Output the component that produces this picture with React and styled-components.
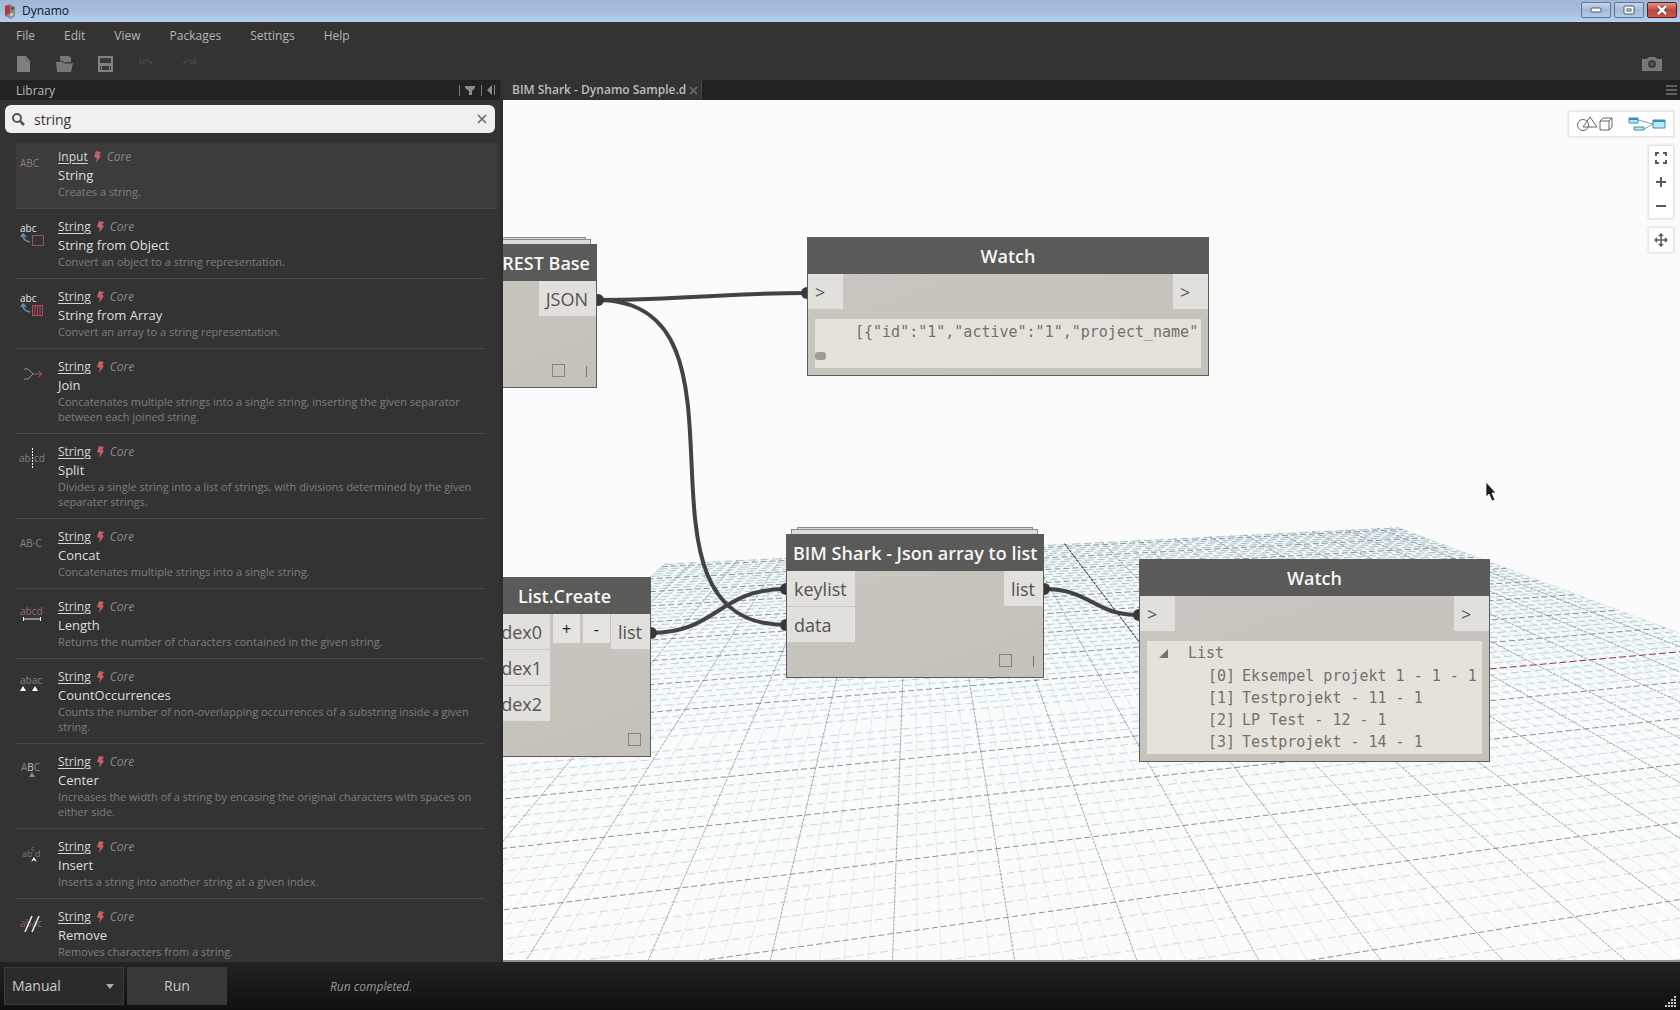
import React from "react";
import styled, { createGlobalStyle } from "styled-components";

const Global = createGlobalStyle`
  *, *::before, *::after { box-sizing: border-box; }
  html, body { margin: 0; height: 100%; overflow: hidden; background: #333; }
  body { font-family: "Open Sans", "Noto Sans", sans-serif; font-size: 13px; color: #c8c8c8; }
  button, input, select { font-family: inherit; margin: 0; padding: 0; border: 0; }
  a { color: inherit; text-decoration: none; }
  ul { list-style: none; margin: 0; padding: 0; }
  svg { display: block; }
`;

const Window = styled.div`
  display: flex;
  flex-direction: column;
  height: 100vh;
  background: #333;
`;

/* ---------- title bar ---------- */
const TitleBar = styled.header`
  display: flex;
  align-items: center;
  gap: 6px;
  height: 22px;
  padding: 0 3px 0 4px;
  background: linear-gradient(#a0b8d6, #a5bddb 45%, #b6cef0);
  color: #101828;
`;
const AppName = styled.span`
  flex: 1;
  font-size: 12px;
  line-height: 20px;
`;
const WindowButtons = styled.div`
  display: flex;
  gap: 3px;
  padding-bottom: 2px;
`;
const WindowButton = styled.button`
  display: grid;
  place-items: center;
  width: 30px;
  height: 16px;
  border: 1px solid ${(p) => (p.$close ? "#5c1c1c" : "#5d7599")};
  border-radius: 2px;
  background: ${(p) =>
    p.$close ? "linear-gradient(#dc9488, #c2483a 50%, #c9594a)" : "linear-gradient(#c5d6ec, #a3bad9 50%, #b4cbe9)"};
`;

/* ---------- menu and tool bars ---------- */
const Menu = styled.nav`
  display: flex;
  gap: 29px;
  height: 26px;
  padding: 0 16px;
  font-size: 12px;
  line-height: 27px;
  color: #b4b4b4;
`;
const ToolBar = styled.div`
  display: flex;
  align-items: center;
  gap: 17px;
  height: 32px;
  padding: 0 16px 0 12px;
`;
const ToolButton = styled.button`
  display: grid;
  place-items: center;
  width: 24px;
  height: 24px;
  background: none;
  &:last-child { margin-left: auto; }
`;

/* ---------- work area ---------- */
const Main = styled.main`
  display: flex;
  flex: 1;
  min-height: 0;
`;
const Sidebar = styled.aside`
  display: flex;
  flex-direction: column;
  flex: none;
  width: 503px;
  border-right: 3px solid #2e2e2e;
  background: #333;
`;
const PanelHeader = styled.div`
  display: flex;
  align-items: center;
  justify-content: space-between;
  flex: none;
  height: 20px;
  padding: 0 4px 0 16px;
  background: #222;
  color: #b8b8b8;
`;
const PanelTitle = styled.h2`
  margin: 0;
  font-size: 12px;
  font-weight: 400;
  line-height: 21px;
`;
const PanelTools = styled.div`
  display: flex;
  gap: 5px;
`;
const PanelButton = styled.button`
  padding-left: 4px;
  border-left: 1px solid #777;
  height: 11px;
  background: none;
`;
const SearchBox = styled.label`
  display: flex;
  align-items: center;
  gap: 9px;
  flex: none;
  height: 28px;
  margin: 5px 5px 6px;
  padding: 0 7px;
  border-radius: 6px;
  background: #f1efef;
`;
const SearchInput = styled.input`
  flex: 1;
  min-width: 0;
  background: none;
  outline: none;
  color: #333;
  font-size: 14px;
`;
const ClearButton = styled.button`
  background: none;
`;
const Results = styled.ul`
  flex: 1;
  min-height: 0;
  overflow: hidden;
`;
const Result = styled.li`
  display: grid;
  grid-template-columns: 42px 1fr;
  margin: 0 ${(p) => (p.$active ? 3 : 15)}px 0 16px;
  padding: 9px ${(p) => (p.$active ? 12 : 0)}px 9px 0;
  border-bottom: 1px solid #4a4a4a;
  background: ${(p) => (p.$active ? "linear-gradient(#333 4px, #3c3c3c 4px)" : "transparent")};
`;
const Meta = styled.div`
  display: flex;
  align-items: center;
  gap: 5px;
  height: 18px;
  font-size: 12px;
  line-height: 18px;
  color: #8a8a8a;
`;
const Category = styled.a`
  color: #d6d6d6;
  text-decoration: underline;
  text-underline-offset: 2px;
`;
const Name = styled.div`
  font-size: 13px;
  line-height: 18px;
  color: #dedede;
`;
const Description = styled.div`
  font-size: 11px;
  line-height: 15px;
  color: #7e7e7e;
`;

/* ---------- workspace ---------- */
const Workspace = styled.section`
  display: flex;
  flex-direction: column;
  flex: 1;
  min-width: 0;
`;
const TabStrip = styled.div`
  display: flex;
  align-items: center;
  justify-content: space-between;
  flex: none;
  height: 20px;
  padding-right: 3px;
  background: #222;
`;
const Tab = styled.div`
  display: flex;
  align-items: center;
  gap: 3px;
  height: 20px;
  padding: 0 3px 0 9px;
  background: #333;
  border-right: 1px solid #484848;
  font-size: 12px;
  font-weight: 600;
  line-height: 20px;
  color: #bdbdbd;
`;
const PlainButton = styled.button`
  background: none;
`;
const Canvas = styled.div`
  position: relative;
  isolation: isolate;
  flex: 1;
  min-height: 0;
  overflow: hidden;
  border-bottom: 2px solid #8e8e8e;
  background: #fcfbfc;
  color: #55534f;
`;
const Backdrop = styled.svg`
  position: absolute;
  inset: 0;
`;
const NodeFrame = styled.article`
  position: absolute;
  left: ${(p) => p.$x}px;
  top: ${(p) => p.$y}px;
  display: flex;
  flex-direction: column;
  width: ${(p) => p.$w}px;
  height: ${(p) => p.$h}px;
  border: 1px solid #5b5b59;
  background: linear-gradient(160deg, #cac6c2, #c4c2b8);
  &::before, &::after {
    content: ${(p) => (p.$stacked ? '""' : "none")};
    position: absolute;
    z-index: -1;
    border: 1px solid #8b8b88;
    border-bottom: 0;
    background: #dcdbd9;
  }
  &::before { left: 10px; right: 10px; top: -8px; height: 4px; }
  &::after { left: 4px; right: 5px; top: -6px; height: 5px; }
`;
const NodeTitle = styled.h3`
  flex: none;
  height: 36px;
  margin: 0;
  padding: 0 6px;
  background: #5a5a58;
  color: #f6f6f4;
  font-size: 18px;
  font-weight: 600;
  line-height: 37px;
  text-align: ${(p) => (p.$right ? "right" : "center")};
  white-space: nowrap;
`;
const NodeBody = styled.div`
  display: flex;
  align-items: flex-start;
`;
const Ports = styled.div`
  display: flex;
  flex-direction: column;
  gap: 1px;
  ${(p) => p.$out && "margin-left: auto;"}
`;
const Port = styled.div`
  height: 35px;
  min-width: ${(p) => (p.$wide ? 71 : 35)}px;
  padding: 0 8px 0 7px;
  background: #e2e0dc;
  font-size: 18px;
  line-height: 36px;
  text-align: ${(p) => (p.$wide ? "right" : "left")};
`;
const StepButtons = styled.div`
  display: flex;
  gap: 3px;
  padding: 0 1px 0 3px;
  flex: 1;
`;
const StepButton = styled.button`
  flex: 1;
  height: 29px;
  background: #e6e4e0;
  color: #222;
  font-size: 16px;
`;
const NodeFooter = styled.div`
  display: flex;
  justify-content: flex-end;
  align-items: flex-end;
  gap: 21px;
  margin-top: auto;
  padding: 0 9px 10px 0;
`;
const Preview = styled.input`
  appearance: none;
  width: 13px;
  height: 13px;
  border: 1px solid #85837d;
`;
const Lacing = styled.span`
  width: 1px;
  height: 11px;
  background: #77756f;
`;
const WatchValue = styled.div`
  flex: 1;
  min-height: 0;
  margin: 10px 7px 7px;
  overflow: hidden;
  background: #e5e2dc;
  font-family: "DejaVu Sans Mono", monospace;
  font-size: 15px;
  line-height: 22px;
  white-space: nowrap;
  color: #74716b;
`;
const RawValue = styled.div`
  padding: 2px 0 0 40px;
`;
const ScrollThumb = styled.div`
  width: 11px;
  height: 8px;
  margin-top: 9px;
  border-radius: 3px;
  background: #9d9c97;
`;
const TreeRoot = styled.div`
  display: flex;
  align-items: center;
  gap: 20px;
  padding: 1px 0 1px 12px;
`;
const TreeItem = styled.li`
  display: flex;
  gap: 7px;
  padding-left: 61px;
`;

/* ---------- floating view controls ---------- */
const ViewControls = styled.div`
  position: absolute;
  top: 12px;
  right: 7px;
  display: flex;
  flex-direction: column;
  align-items: flex-end;
  gap: 10px;
`;
const ControlGroup = styled.div`
  display: flex;
  flex-direction: ${(p) => (p.$row ? "row" : "column")};
  background: #fff;
  box-shadow: 0 0 2px 1px #d9d9d9;
`;
const ControlButton = styled.button`
  display: grid;
  place-items: center;
  width: ${(p) => (p.$wide ? 52 : 24)}px;
  height: 24px;
  background: none;
  & + & { border-left: ${(p) => (p.$wide ? "1px solid #ddd" : "0")}; }
`;

/* ---------- run bar ---------- */
const RunBar = styled.footer`
  display: flex;
  align-items: center;
  gap: 3px;
  flex: none;
  height: 48px;
  padding: 0 3px 0 4px;
  background: linear-gradient(#232323, #101010);
`;
const ModePicker = styled.label`
  position: relative;
  width: 120px;
  height: 38px;
  svg { position: absolute; right: 10px; top: 17px; pointer-events: none; }
`;
const ModeSelect = styled.select`
  appearance: none;
  width: 100%;
  height: 100%;
  padding: 0 0 1px 7px;
  border: 1px solid #3a3a3a;
  background: #2b2b2b;
  color: #c9c9c9;
  font-size: 14px;
`;
const RunButton = styled.button`
  width: 100px;
  height: 38px;
  padding-bottom: 1px;
  background: #383838;
  color: #c9c9c9;
  font-size: 14px;
`;
const Status = styled.span`
  flex: 1;
  padding-left: 100px;
  font-size: 12px;
  font-style: italic;
  color: #999;
`;
const Grip = styled.div`
  align-self: flex-end;
  padding-bottom: 2px;
`;

/* ---------- ground grid: two vanishing points on one horizon ---------- */
const HORIZON = 247;
const project = (s, t) => {
  const a = 0.0169 * s;
  const b = -0.0839 * t;
  const w = 1 + a + b;
  return [(678 + a * 4537 + b * 412) / w, (597 + (a + b) * HORIZON) / w];
};
const point = (s, t) => project(s, t).map((n) => n.toFixed(1)).join(" ");
const segment = (s1, t1, s2, t2) => `M${point(s1, t1)}L${point(s2, t2)}`;
const EXTENT = 48;
const FAR = -9.3;
const NEAR = 8.6;
const lines = { acrossMinor: [], acrossMajor: [], depthMinor: [], depthMajor: [] };
for (let i = -EXTENT; i <= EXTENT; i++) {
  const major = i % 5 === 0;
  const u = i / 5;
  if (u >= FAR && u <= NEAR && i !== 0) {
    lines[major ? "acrossMajor" : "acrossMinor"].push(segment(-9.6, u, 9.6, u));
  }
  lines[major ? "depthMajor" : "depthMinor"].push(segment(u, FAR, u, NEAR));
}
const ground = `M${point(-9.6, FAR)}L${point(9.6, FAR)}L${point(9.6, NEAR)}L${point(-9.6, NEAR)}Z`;

function GroundGrid() {
  return (
    <g fill="none">
      <defs>
        <linearGradient id="haze" gradientUnits="userSpaceOnUse" x1="0" y1="425" x2="0" y2="860">
          <stop offset="0" stopColor="#f2fafc" />
          <stop offset="0.500" stopColor="#f8fcfc" />
          <stop offset="1" stopColor="#fcfbfc" />
        </linearGradient>
        <linearGradient id="fine" gradientUnits="userSpaceOnUse" x1="0" y1="425" x2="0" y2="860">
          <stop offset="0" stopColor="#8aa3ac" />
          <stop offset="0.400" stopColor="#b3c3c6" />
          <stop offset="1" stopColor="#c6c6c7" />
        </linearGradient>
      </defs>
      <path d={ground} fill="url(#haze)" />
      <path d={lines.depthMinor.join("")} stroke="url(#fine)" strokeWidth="0.7" opacity="0.5" strokeDasharray="14 2" />
      <path d={lines.acrossMinor.join("")} stroke="url(#fine)" strokeWidth="0.9" opacity="0.75" strokeDasharray="8 4" />
      <path d={lines.depthMajor.join("")} stroke="#74787a" strokeWidth="0.9" opacity="0.75" strokeDasharray="3 1" />
      <path d={lines.acrossMajor.join("")} stroke="#74787a" strokeWidth="1" opacity="0.8" strokeDasharray="6 3" />
      <path d={segment(0, FAR, 0, 0)} stroke="#333" strokeDasharray="3 1" />
      <path d={segment(0, 0, 9.6, 0)} stroke="#8e2f48" strokeDasharray="7 3" />
    </g>
  );
}

function Wires() {
  return (
    <g>
      <g fill="none" stroke="#434343" strokeWidth="4">
        <path d="M94 200C184 200 224 193 304 193" />
        <path d="M94 200C269 200 108 525 283 525" />
        <path d="M147 533C215 533 215 489 283 489" />
        <path d="M541 489C588 489 590 515 636 515" />
      </g>
      <g fill="#383838">
        <circle cx="95" cy="200" r="6" />
        <circle cx="304" cy="193" r="6" />
        <circle cx="283" cy="489" r="6" />
        <circle cx="283" cy="525" r="6" />
        <circle cx="148" cy="533" r="6" />
        <circle cx="541" cy="489" r="6" />
        <circle cx="636" cy="515" r="6" />
      </g>
    </g>
  );
}

/* ---------- icons ---------- */
const Bolt = () => (
  <svg width="9" height="12" viewBox="0 0 9 12">
    <path d="M3 0L8 1 6 4 8 5 3 12 4 7 1 6Z" fill="#c4606c" />
  </svg>
);

const GLYPHS = {
  input: <text x="4" y="17" fontSize="10" fill="#8f7a7a">ABC</text>,
  object: (
    <>
      <text x="4" y="12" fontSize="10" fill="#e6e6e6">abc</text>
      <path d="M7 15Q7 21 14 22M5 17L7 14L10 17" fill="none" stroke="#6d8ea6" strokeWidth="1.500" />
      <path d="M16.500 15.500h11v10h-11z" fill="none" stroke="#a05058" />
    </>
  ),
  array: (
    <>
      <text x="4" y="12" fontSize="10" fill="#e6e6e6">abc</text>
      <path d="M7 15Q7 21 14 22M5 17L7 14L10 17" fill="none" stroke="#6d8ea6" strokeWidth="1.500" />
      <path d="M16.500 15v11M19 15v11M21.500 15v11M24 15v11M26.500 15v11M16 15.500h11M16 25.500h11" stroke="#b04c58" />
    </>
  ),
  join: (
    <>
      <path d="M8 9h4l5 5-5 5H8" fill="none" stroke="#8d9499" />
      <path d="M17 14h8M22 11l4 3-4 3" fill="none" stroke="#a35a64" />
    </>
  ),
  split: (
    <>
      <text x="3" y="17" fontSize="10" fill="#77828c">ab</text>
      <text x="18" y="17" fontSize="10" fill="#77828c">cd</text>
      <path d="M16.500 3v20" stroke="#eee" strokeDasharray="2 1" />
    </>
  ),
  concat: <text x="4" y="17" fontSize="10" fill="#858585">AB·C</text>,
  length: (
    <>
      <text x="4" y="15" fontSize="10" fill="#9a6a70">abcd</text>
      <path d="M7.500 17v4M24.500 17v4M7 19h18" stroke="#eee" />
    </>
  ),
  count: (
    <>
      <text x="4" y="14" fontSize="10" fill="#858585">abac</text>
      <path d="M4 21l3-5 3 5zM16 21l3-5 3 5z" fill="#fff" />
    </>
  ),
  center: (
    <>
      <text x="5" y="16" fontSize="10" fill="#858585">A<tspan fill="#c4c4c4">B</tspan>C</text>
      <path d="M13 22l3-5 3 5z" fill="#888" />
    </>
  ),
  insert: (
    <>
      <text x="6" y="17" fontSize="9" fill="#6f7c88">ab</text>
      <text x="15" y="11" fontSize="8" fill="#6f7c88">c</text>
      <text x="19" y="17" fontSize="9" fill="#6f7c88">d</text>
      <path d="M15 22l3-5 3 5-3-2z" fill="#fff" />
    </>
  ),
  remove: (
    <>
      <text x="4" y="17" fontSize="10" fill="#85666a">abac</text>
      <path d="M9 22l7-16M16 22l7-16" stroke="#eee" strokeWidth="1.500" />
    </>
  ),
};
const NodeIcon = ({ kind }) => (
  <svg width="32" height="30" viewBox="0 -2 32 30">{GLYPHS[kind]}</svg>
);

const RESULTS = [
  ["input", "Input", "String", "Creates a string."],
  ["object", "String", "String from Object", "Convert an object to a string representation."],
  ["array", "String", "String from Array", "Convert an array to a string representation."],
  ["join", "String", "Join", "Concatenates multiple strings into a single string, inserting the given separator between each joined string."],
  ["split", "String", "Split", "Divides a single string into a list of strings, with divisions determined by the given separater strings."],
  ["concat", "String", "Concat", "Concatenates multiple strings into a single string."],
  ["length", "String", "Length", "Returns the number of characters contained in the given string."],
  ["count", "String", "CountOccurrences", "Counts the number of non-overlapping occurrences of a substring inside a given string."],
  ["center", "String", "Center", "Increases the width of a string by encasing the original characters with spaces on either side."],
  ["insert", "String", "Insert", "Inserts a string into another string at a given index."],
  ["remove", "String", "Remove", "Removes characters from a string."],
];

const WATCH_LIST = ["Eksempel projekt 1 - 1 - 1", "Testprojekt - 11 - 1", "LP Test - 12 - 1", "Testprojekt - 14 - 1"];

function Library() {
  return (
    <Sidebar>
      <PanelHeader>
        <PanelTitle>Library</PanelTitle>
        <PanelTools>
          <PanelButton aria-label="Filter">
            <svg width="12" height="11" viewBox="0 0 12 11"><path d="M1 1h10v2L8 6v4H5V6L1 3z" fill="#8b8b8b" /></svg>
          </PanelButton>
          <PanelButton aria-label="Collapse">
            <svg width="10" height="11" viewBox="0 0 10 11"><path d="M6 0v10L1 5zM8 0h1v10H8z" fill="#8b8b8b" /></svg>
          </PanelButton>
        </PanelTools>
      </PanelHeader>
      <SearchBox>
        <svg width="13" height="13" viewBox="0 0 13 13" fill="none" stroke="#555">
          <circle cx="5" cy="5" r="4" strokeWidth="2" /><path d="M8 8l4 4" strokeWidth="2.500" />
        </svg>
        <SearchInput aria-label="Search" defaultValue="string" />
        <ClearButton aria-label="Clear">
          <svg width="12" height="12" viewBox="0 0 12 12"><path d="M2 2l8 8M10 2L2 10" stroke="#666" strokeWidth="1.500" /></svg>
        </ClearButton>
      </SearchBox>
      <Results>
        {RESULTS.map(([kind, category, name, description], i) => (
          <Result key={name} $active={i === 0}>
            <NodeIcon kind={kind} />
            <div>
              <Meta><Category href="#">{category}</Category><Bolt /><i>Core</i></Meta>
              <Name>{name}</Name>
              <Description>{description}</Description>
            </div>
          </Result>
        ))}
      </Results>
    </Sidebar>
  );
}

function Footer({ lacing }) {
  return (
    <NodeFooter>
      <Preview type="checkbox" aria-label="Preview" />
      {lacing && <Lacing />}
    </NodeFooter>
  );
}

function WatchPorts() {
  return (
    <NodeBody>
      <Ports><Port>&gt;</Port></Ports>
      <Ports $out><Port>&gt;</Port></Ports>
    </NodeBody>
  );
}

export default function App() {
  return (
    <Window>
      <Global />
      <TitleBar>
        <svg width="12" height="15" viewBox="0 0 12 15">
          <path d="M1 2l5-2 5 3v9l-4 3-6-3z" fill="#8d8d8d" /><path d="M1 2l5-1v8l-5 3z" fill="#b23a3a" /><path d="M7 2l4 2-4 3z" fill="#3d6a60" /><path d="M6 10l4-1-3 4z" fill="#ddd" />
        </svg>
        <AppName>Dynamo</AppName>
        <WindowButtons>
          <WindowButton aria-label="Minimize">
            <svg width="12" height="6"><rect x="1" y="1" width="10" height="4" rx="1" fill="#fff" stroke="#4a5568" /></svg>
          </WindowButton>
          <WindowButton aria-label="Maximize">
            <svg width="12" height="10" fill="none"><rect x="1" y="1" width="10" height="8" rx="1" fill="#fff" stroke="#4a5568" /><rect x="4" y="4" width="4" height="2" stroke="#4a5568" /></svg>
          </WindowButton>
          <WindowButton $close aria-label="Close">
            <svg width="12" height="10"><path d="M2 1l8 8M10 1L2 9" stroke="#5c2a2a" strokeWidth="4" /><path d="M2 1l8 8M10 1L2 9" stroke="#fff" strokeWidth="2.500" /></svg>
          </WindowButton>
        </WindowButtons>
      </TitleBar>
      <Menu>
        {["File", "Edit", "View", "Packages", "Settings", "Help"].map((m) => <a key={m} href="#">{m}</a>)}
      </Menu>
      <ToolBar>
        <ToolButton aria-label="New"><svg width="14" height="16"><path d="M0 0h9l4 5v11H0z" fill="#808080" /><path d="M9 0v5h4" fill="none" stroke="#666" /></svg></ToolButton>
        <ToolButton aria-label="Open"><svg width="18" height="16"><path d="M4 0h9l2 2v4H4zM0 6h6l2-2 2 3h7l-2 9H1z" fill="#777" /><path d="M1 5h5l2 2h8" fill="none" stroke="#3b3b3b" /></svg></ToolButton>
        <ToolButton aria-label="Save"><svg width="16" height="16"><path d="M0 0h15v16H0z" fill="#828282" /><path d="M2 2h11v5H2zM4 10h7v4H4zM2 10h1v4H2zM12 10h1v4h-1z" fill="#3a3a3a" /></svg></ToolButton>
        <ToolButton aria-label="Undo"><svg width="16" height="14"><path d="M1 1v5h5M2 5q6-5 12 3" fill="none" stroke="#404040" strokeWidth="2" /></svg></ToolButton>
        <ToolButton aria-label="Redo"><svg width="16" height="14"><path d="M15 1v5h-5M14 5q-6-5-12 3" fill="none" stroke="#404040" strokeWidth="2" /></svg></ToolButton>
        <ToolButton aria-label="Export image"><svg width="22" height="16"><path d="M1 3h5l2-2h6l2 2h5v12H1z" fill="#777" /><circle cx="11" cy="8" r="4" fill="#3a3a3a" /><circle cx="11" cy="8" r="2" fill="#555" /></svg></ToolButton>
      </ToolBar>
      <Main>
        <Library />
        <Workspace>
          <TabStrip>
            <Tab>
              BIM Shark - Dynamo Sample.d
              <PlainButton aria-label="Close tab"><svg width="9" height="9"><path d="M1 1l7 7M8 1L1 8" stroke="#707070" strokeWidth="1.500" /></svg></PlainButton>
            </Tab>
            <PlainButton aria-label="Tabs"><svg width="11" height="10"><path d="M0 1h11M0 5h11M0 9h11" stroke="#777" strokeWidth="1.500" /></svg></PlainButton>
          </TabStrip>
          <Canvas>
            <Backdrop width="100%" height="100%">
              <GroundGrid />
              <Wires />
            </Backdrop>

            <NodeFrame $x={-140} $y={144} $w={234} $h={144} $stacked>
              <NodeTitle $right>REST Base</NodeTitle>
              <NodeBody><Ports $out><Port>JSON</Port></Ports></NodeBody>
              <Footer lacing />
            </NodeFrame>

            <NodeFrame $x={304} $y={137} $w={402} $h={139}>
              <NodeTitle>Watch</NodeTitle>
              <WatchPorts />
              <WatchValue>
                <RawValue>[{"{"}"id":"1","active":"1","project_name"</RawValue>
                <ScrollThumb />
              </WatchValue>
            </NodeFrame>

            <NodeFrame $x={-25} $y={477} $w={173} $h={180}>
              <NodeTitle>List.Create</NodeTitle>
              <NodeBody>
                <Ports><Port $wide>dex0</Port><Port $wide>dex1</Port><Port $wide>dex2</Port></Ports>
                <StepButtons>
                  <StepButton>+</StepButton>
                  <StepButton>-</StepButton>
                </StepButtons>
                <Ports $out><Port>list</Port></Ports>
              </NodeBody>
              <Footer />
            </NodeFrame>

            <NodeFrame $x={283} $y={434} $w={258} $h={144} $stacked>
              <NodeTitle>BIM Shark - Json array to list</NodeTitle>
              <NodeBody>
                <Ports><Port>keylist</Port><Port>data</Port></Ports>
                <Ports $out><Port>list</Port></Ports>
              </NodeBody>
              <Footer lacing />
            </NodeFrame>

            <NodeFrame $x={636} $y={459} $w={351} $h={203}>
              <NodeTitle>Watch</NodeTitle>
              <WatchPorts />
              <WatchValue>
                <TreeRoot>
                  <svg width="9" height="9"><path d="M9 0v9H0z" fill="#77746e" /></svg>
                  List
                </TreeRoot>
                <ul>
                  {WATCH_LIST.map((value, i) => (
                    <TreeItem key={i}><span>[{i}]</span><span>{value}</span></TreeItem>
                  ))}
                </ul>
              </WatchValue>
            </NodeFrame>

            <Backdrop width="100%" height="100%" pointerEvents="none">
              <path d="M983 382v15l3-3 3 7 3-1-3-7h4z" fill="#1c1c1c" stroke="#fff" strokeWidth="0.800" />
            </Backdrop>

            <ViewControls>
              <ControlGroup $row>
                <ControlButton $wide aria-label="Geometry view">
                  <svg width="38" height="16" fill="none" stroke="#666"><circle cx="7" cy="9" r="5.500" /><path d="M14 1l7 10H7zM24 5h9v9h-9zM24 5l3-3h9v9l-3 3M33 5l3-3" /></svg>
                </ControlButton>
                <ControlButton $wide aria-label="Graph view">
                  <svg width="38" height="16" fill="#bfe4f2" stroke="#3494b4"><path d="M10 4L25 8L16 13" fill="none" stroke="#8a9ea6" /><path d="M1 2h9v5H1zM6 11h10v3H6zM25 4h12v8H25z" /><path d="M1 3h9M25 5h12" strokeWidth="2" /></svg>
                </ControlButton>
              </ControlGroup>
              <ControlGroup>
                <ControlButton aria-label="Zoom to fit"><svg width="12" height="12" fill="none" stroke="#5a5a5a" strokeWidth="2"><path d="M1 4V1h3M8 1h3v3M11 8v3H8M4 11H1V8" /></svg></ControlButton>
                <ControlButton aria-label="Zoom in"><svg width="10" height="10" stroke="#5a5a5a" strokeWidth="2"><path d="M0 5h10M5 0v10" /></svg></ControlButton>
                <ControlButton aria-label="Zoom out"><svg width="10" height="10" stroke="#5a5a5a" strokeWidth="2"><path d="M0 5h10" /></svg></ControlButton>
              </ControlGroup>
              <ControlGroup>
                <ControlButton aria-label="Pan"><svg width="14" height="14" fill="none" stroke="#5a5a5a" strokeWidth="1.500"><path d="M7 1v12M1 7h12M5 3l2-2 2 2M5 11l2 2 2-2M3 5L1 7l2 2M11 5l2 2-2 2" /></svg></ControlButton>
              </ControlGroup>
            </ViewControls>
          </Canvas>
        </Workspace>
      </Main>
      <RunBar>
        <ModePicker>
          <ModeSelect aria-label="Run mode" defaultValue="Manual"><option>Manual</option></ModeSelect>
          <svg width="8" height="5"><path d="M0 0h8L4 5z" fill="#aaa" /></svg>
        </ModePicker>
        <RunButton>Run</RunButton>
        <Status>Run completed.</Status>
        <Grip><svg width="12" height="12" fill="#ccc"><path d="M9 0h2v2H9zM9 3h2v2H9zM6 3h2v2H6zM9 6h2v2H9zM6 6h2v2H6zM3 6h2v2H3zM9 9h2v2H9zM6 9h2v2H6zM3 9h2v2H3zM0 9h2v2H0z" /></svg></Grip>
      </RunBar>
    </Window>
  );
}
